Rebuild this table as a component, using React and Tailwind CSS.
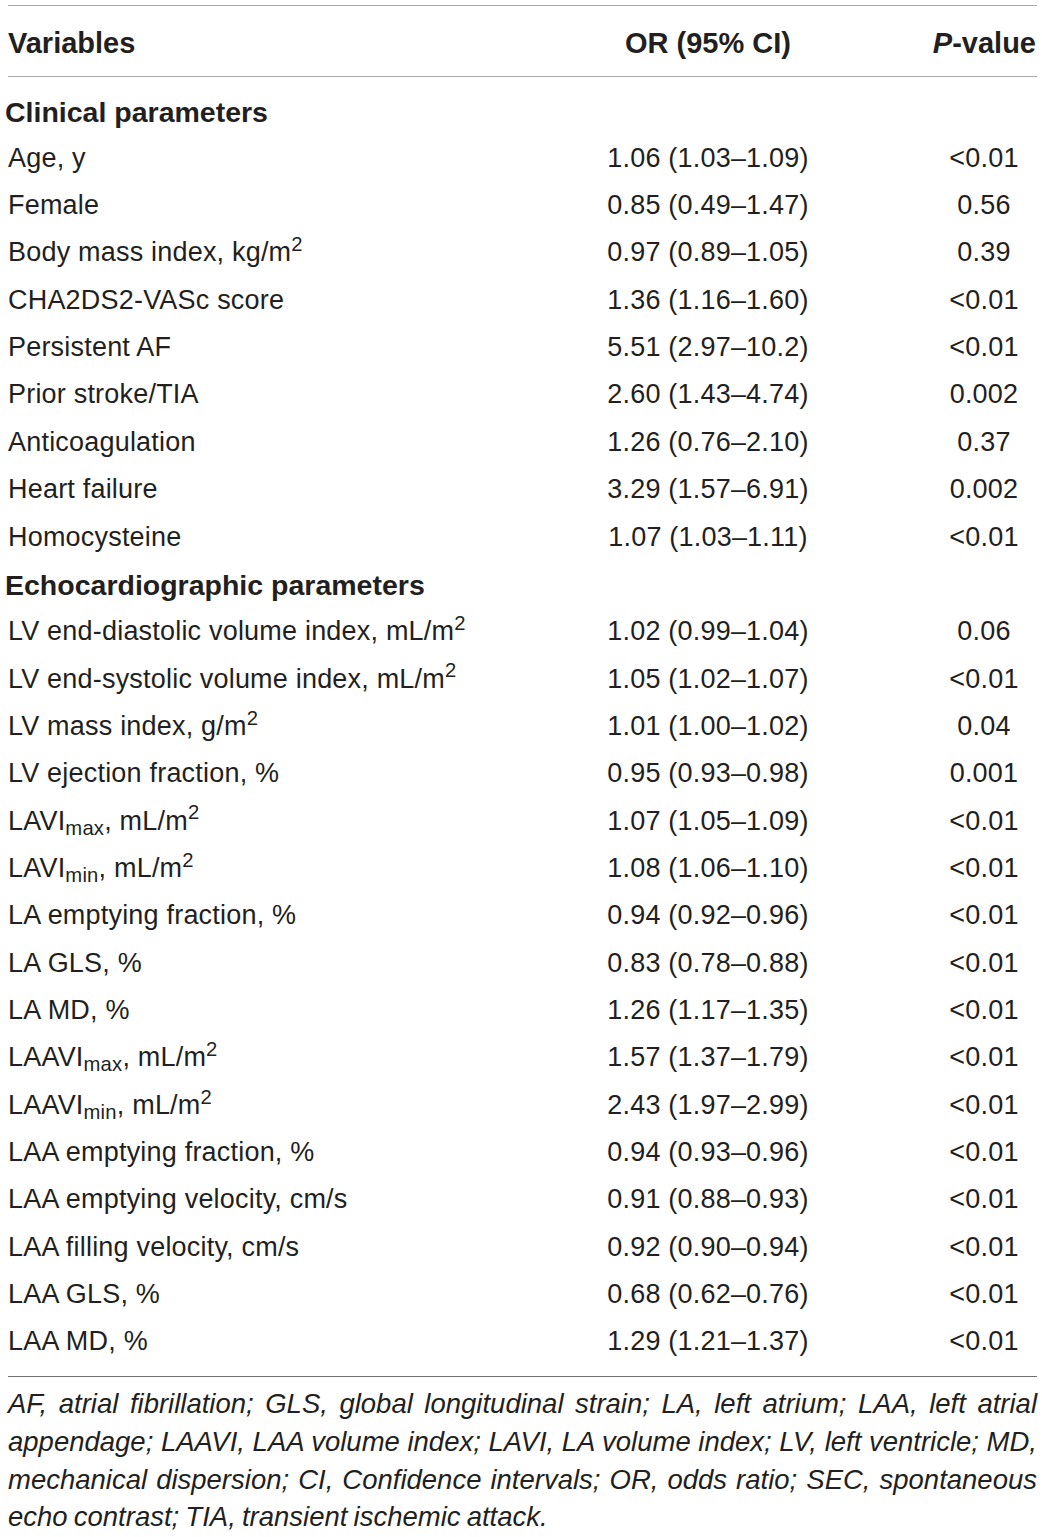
import React from "react";

const clinical = [
  ["Age, y", "1.06 (1.03–1.09)", "<0.01"],
  ["Female", "0.85 (0.49–1.47)", "0.56"],
  [<>Body mass index, kg/m<sup>2</sup></>, "0.97 (0.89–1.05)", "0.39"],
  ["CHA2DS2-VASc score", "1.36 (1.16–1.60)", "<0.01"],
  ["Persistent AF", "5.51 (2.97–10.2)", "<0.01"],
  ["Prior stroke/TIA", "2.60 (1.43–4.74)", "0.002"],
  ["Anticoagulation", "1.26 (0.76–2.10)", "0.37"],
  ["Heart failure", "3.29 (1.57–6.91)", "0.002"],
  ["Homocysteine", "1.07 (1.03–1.11)", "<0.01"],
];

const echo = [
  [<>LV end-diastolic volume index, mL/m<sup>2</sup></>, "1.02 (0.99–1.04)", "0.06"],
  [<>LV end-systolic volume index, mL/m<sup>2</sup></>, "1.05 (1.02–1.07)", "<0.01"],
  [<>LV mass index, g/m<sup>2</sup></>, "1.01 (1.00–1.02)", "0.04"],
  ["LV ejection fraction, %", "0.95 (0.93–0.98)", "0.001"],
  [<>LAVI<sub>max</sub>, mL/m<sup>2</sup></>, "1.07 (1.05–1.09)", "<0.01"],
  [<>LAVI<sub>min</sub>, mL/m<sup>2</sup></>, "1.08 (1.06–1.10)", "<0.01"],
  ["LA emptying fraction, %", "0.94 (0.92–0.96)", "<0.01"],
  ["LA GLS, %", "0.83 (0.78–0.88)", "<0.01"],
  ["LA MD, %", "1.26 (1.17–1.35)", "<0.01"],
  [<>LAAVI<sub>max</sub>, mL/m<sup>2</sup></>, "1.57 (1.37–1.79)", "<0.01"],
  [<>LAAVI<sub>min</sub>, mL/m<sup>2</sup></>, "2.43 (1.97–2.99)", "<0.01"],
  ["LAA emptying fraction, %", "0.94 (0.93–0.96)", "<0.01"],
  ["LAA emptying velocity, cm/s", "0.91 (0.88–0.93)", "<0.01"],
  ["LAA filling velocity, cm/s", "0.92 (0.90–0.94)", "<0.01"],
  ["LAA GLS, %", "0.68 (0.62–0.76)", "<0.01"],
  ["LAA MD, %", "1.29 (1.21–1.37)", "<0.01"],
];

function Row({ label, or, p }) {
  return (
    <div className="grid grid-cols-[572px_256px_1fr] h-[47.35px] items-center">
      <div className="whitespace-nowrap">{label}</div>
      <div className="text-center">{or}</div>
      <div className="pl-[95px] text-center">{p}</div>
    </div>
  );
}

function Section({ title }) {
  return (
    <div className="h-[47.35px] flex items-center pt-[3px] -ml-[3px] font-bold text-[28.5px] tracking-normal">
      {title}
    </div>
  );
}

export default function App() {
  return (
    <div className="min-h-screen bg-white pt-[5px] pl-[8px] pr-[5px] font-['Liberation_Sans',Arial,sans-serif] text-[#231f20] text-[27px] tracking-[0.2px]">
      {/* table header */}
      <div className="border-t border-b border-[#a8a8a8] grid grid-cols-[572px_256px_1fr] h-[72px] items-center pt-[5px] font-bold text-[29px] tracking-normal">
        <div>Variables</div>
        <div className="text-center">OR (95% CI)</div>
        <div className="pl-[95px] text-right pr-[1px]">
          <i>P</i>-value
        </div>
      </div>

      <div className="pt-[10px] pb-[11px] border-b border-[#6f6f6f]">
        <Section title="Clinical parameters" />
        {clinical.map((r, i) => (
          <Row key={i} label={r[0]} or={r[1]} p={r[2]} />
        ))}
        <Section title="Echocardiographic parameters" />
        {echo.map((r, i) => (
          <Row key={i} label={r[0]} or={r[1]} p={r[2]} />
        ))}
      </div>

      {/* footnote */}
      <p className="pt-[8px] italic text-justify leading-[37.7px] text-[27.5px] tracking-normal [word-spacing:-1.5px]">
        AF, atrial fibrillation; GLS, global longitudinal strain; LA, left atrium; LAA, left atrial
        appendage; LAAVI, LAA volume index; LAVI, LA volume index; LV, left ventricle; MD,
        mechanical dispersion; CI, Confidence intervals; OR, odds ratio; SEC, spontaneous echo
        contrast; TIA, transient ischemic attack.
      </p>
    </div>
  );
}
